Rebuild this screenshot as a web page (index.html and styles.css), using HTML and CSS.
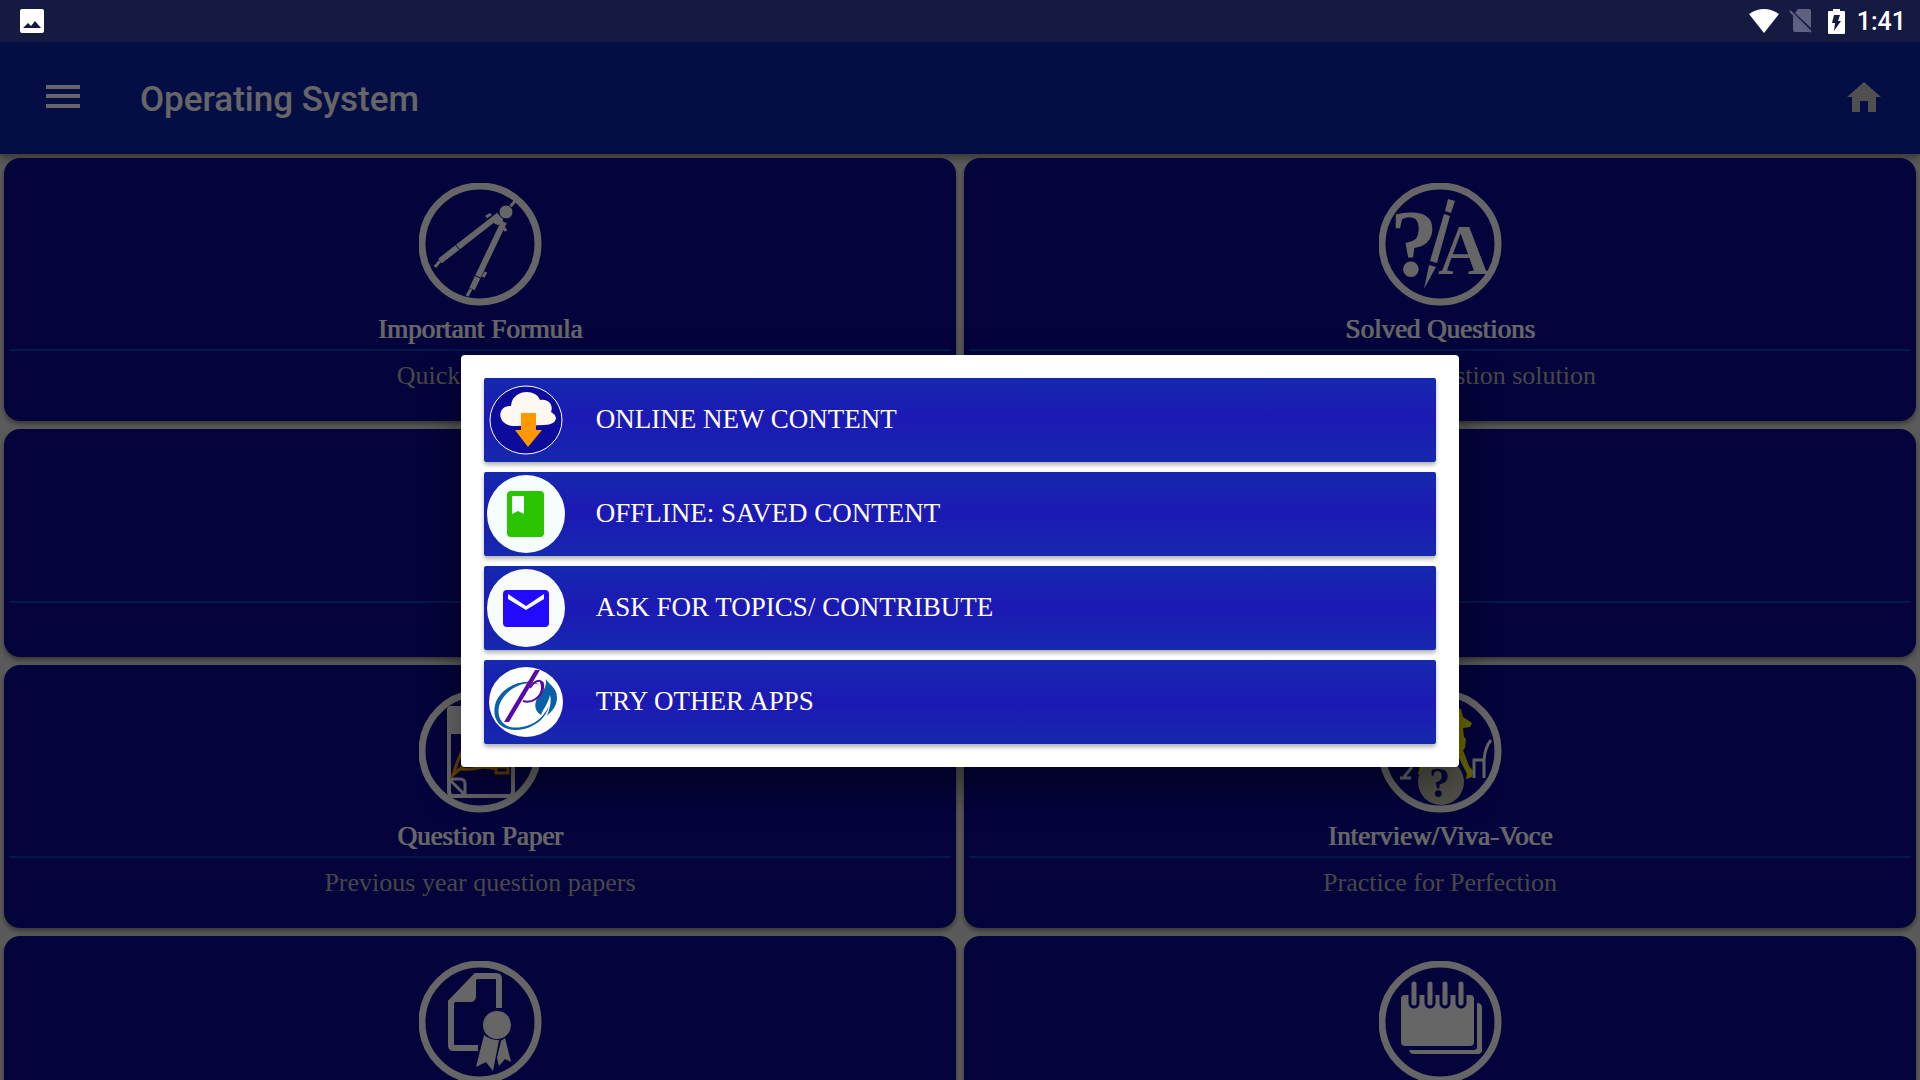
FILE: index.html
```html
<!DOCTYPE html>
<html lang="en">

<head>
    <meta charset="UTF-8">
    <meta name="viewport" content="width=device-width, initial-scale=1.0">
    <title>Operating System</title>
    <link rel="stylesheet" href="styles.css">
</head>

<body>
    <div class="status-bar">
        <svg class="status-icon" viewBox="0 0 24 24">
            <path fill="#fff" fill-rule="evenodd" d="M2 0h20a2 2 0 0 1 2 2v20a2 2 0 0 1-2 2H2a2 2 0 0 1-2-2V2a2 2 0 0 1 2-2zM3 19h18l-6-7-4 5-3-3z" />
        </svg>
        <div class="status-right">
            <svg class="wifi" viewBox="0 0 30 24">
                <path fill="#fff" d="M0 5Q15-5 30 5L15 24z" />
            </svg>
            <svg class="sim" viewBox="0 0 24 24">
                <path fill="#5e6180" d="M9 0h11a2 2 0 0 1 2 2v17L6 4zM4 6l17 17H6a2 2 0 0 1-2-2z" />
                <path stroke="#5e6180" stroke-width="2" d="M1 2l21 21" />
            </svg>
            <svg class="battery" viewBox="0 0 17 25">
                <path fill="#fff" d="M5 0h7v2h4a1 1 0 0 1 1 1v21a1 1 0 0 1-1 1H1a1 1 0 0 1-1-1V3a1 1 0 0 1 1-1h4z" />
                <path fill="#141a40" d="M6 6h6l-2 6h3L6 22l1-8H4z" />
            </svg>
            <span class="clock">1:41</span>
        </div>
    </div>

    <div class="screen">
        <header class="app-bar">
            <button class="icon-button" aria-label="Menu">
                <svg class="menu-icon" viewBox="0 0 34 34">
                    <path fill="#fff" d="M0 4h34v4H0zM0 13h34v4H0zM0 23h34v4H0z" />
                </svg>
            </button>
            <h1>Operating System</h1>
            <button class="icon-button" aria-label="Home">
                <svg class="home-icon" viewBox="0 0 34 34">
                    <path fill="#c8c8c8" d="M17 1l17 15h-5v15h-8V20h-8v11H5V16H0z" />
                </svg>
            </button>
        </header>

        <main class="grid">
            <section class="card">
                <svg class="card-icon" viewBox="0 0 123 123">
                    <circle class="ring" cx="61" cy="61" r="58" />
                    <path class="line leg" d="M80 32L21 78M85 39L53 106" />
                    <path class="line thin" d="M21 78l-5 6M52 106l-4 7M91 24l5-6M67 34l5-3M87 48l-2-3M64 94l3-5" />
                    <path class="cut" d="M36 61l5 6M55 92l8 4" />
                    <circle class="fill" cx="79" cy="37" r="5" />
                    <circle class="fill outlined" cx="87" cy="29" r="7" />
                </svg>
                <h2>Important Formula</h2>
                <p>Quick reference</p>
            </section>

            <section class="card">
                <svg class="card-icon" viewBox="0 0 123 123">
                    <circle class="ring" cx="61" cy="61" r="58" />
                    <text class="glyph" x="11" y="93" font-size="96">?</text>
                    <text class="glyph" x="59" y="91" font-size="72">A</text>
                    <path class="fill" d="M69 16l7 2-4 12-6-2zM65 31l6 2-13 47-7-2zM50 82l7 2-12 22z" />
                </svg>
                <h2>Solved Questions</h2>
                <p>Step by step question solution</p>
            </section>

            <section class="card card-short"></section>
            <section class="card card-short"></section>

            <section class="card">
                <svg class="card-icon" viewBox="0 0 123 123">
                    <circle class="ring" cx="61" cy="61" r="58" />
                    <path class="fill" d="M31 16h60a4 4 0 0 1 4 4v24H28V20a4 4 0 0 1 3-4z" />
                    <rect class="line" x="30" y="18" width="64" height="88" rx="4" />
                    <path class="line thin" d="M30 89h11q5 0 5 5v12M31 90l15 15" />
                    <path class="pencil" d="M34 85l4-12 6-14 8 5-10 14zM41 79q10 1 18-1t18 1M77 77h12v6H77z" />
                </svg>
                <h2>Question Paper</h2>
                <p>Previous year question papers</p>
            </section>

            <section class="card">
                <svg class="card-icon" viewBox="0 0 123 123">
                    <circle class="ring" cx="61" cy="61" r="58" />
                    <path fill="#ff0" d="M74 18l8 1 2 8 9 6-2 4-7 1 1 9 2 2-1 9-2 2 6 16 4 5-1 6-6 2 1-5-10-20-7-7-27 28-5-1 3-12 24-30z" />
                    <path class="line thin" d="M112 50q-6 7-7 20v18M105 70H95v18M21 88h11M25 87l8-10" />
                    <circle fill="#ccccb8" cx="62" cy="92" r="23" />
                    <text class="glyph glyph-dark" x="50" y="107" font-size="42">?</text>
                </svg>
                <h2>Interview/Viva-Voce</h2>
                <p>Practice for Perfection</p>
            </section>

            <section class="card">
                <svg class="card-icon" viewBox="0 0 123 123">
                    <circle class="ring" cx="61" cy="61" r="58" />
                    <path class="line leg" d="M80 47V18q0-3-3-3H57L32 41v43q0 3 3 3h24" />
                    <path class="fill" d="M57 15v20q0 6-6 6H32z" />
                    <circle class="fill" cx="78" cy="64" r="14" />
                    <path class="fill" d="M65 74q6 5 15 5l-6 31-7-9-10 5zM82 80l4-3 6 24-6-3-6 7-2-8z" />
                </svg>
            </section>

            <section class="card">
                <svg class="card-icon" viewBox="0 0 123 123">
                    <circle class="ring" cx="61" cy="61" r="58" />
                    <rect class="fill" x="22" y="34" width="73" height="51" rx="4" />
                    <path class="fill" d="M98 42q5 0 5 5v42q0 4-4 4H34q-3 0-4-4h65q3 0 3-3z" />
                    <path class="ring-hole" d="M35 34v8M51 34v8M66 34v8M82 34v8" />
                    <path class="ring-bar" d="M35 23v19M51 23v19M66 23v19M82 23v19" />
                </svg>
            </section>
        </main>

        <div class="overlay">
            <div class="dialog" role="dialog" aria-label="Content options">
                <button class="option">
                    <svg class="option-icon" viewBox="0 0 84 84">
                        <ellipse cx="42" cy="42" rx="36" ry="34" fill="#0c0b9c" stroke="#fff" />
                        <path fill="#fff8f0" d="M27 28C28 11 52 10 56 22C64 20 70 27 67 34C76 39 72 47 60 47L32 48C12 49 12 27 27 28z" />
                        <path fill="#ff9800" d="M37 35h15v17h6L44 69 31 52h6z" />
                    </svg>
                    <span>ONLINE NEW CONTENT</span>
                </button>
                <button class="option">
                    <svg class="option-icon" viewBox="0 0 84 84">
                        <circle cx="42" cy="42" r="39" fill="#f5fdfd" />
                        <rect x="23" y="19" width="37" height="46" rx="4" fill="#2ac500" />
                        <path fill="#f5fdfd" d="M28 24h12v18l-6-3-6 3z" />
                    </svg>
                    <span>OFFLINE: SAVED CONTENT</span>
                </button>
                <button class="option">
                    <svg class="option-icon" viewBox="0 0 84 84">
                        <circle cx="42" cy="42" r="39" fill="#f7fcfa" />
                        <rect x="19" y="24" width="46" height="37" rx="4" fill="#220aff" />
                        <path fill="#f7fcfa" d="M24 28l18 12 18-12v5L42 44 24 33z" />
                    </svg>
                    <span>ASK FOR TOPICS/ CONTRIBUTE</span>
                </button>
                <button class="option">
                    <svg class="option-icon" viewBox="0 0 84 84">
                        <ellipse cx="42" cy="42" rx="37" ry="35" fill="#fff" />
                        <path fill="#0860a8" d="M56 25C42 16 16 26 11 45C7 64 22 73 40 69C52 66 62 58 65 46C59 58 50 65 38 67C23 70 12 62 15 46C20 30 39 19 56 25z" />
                        <path fill="#0860a8" d="M62 19C65 25 73 27 73 38C73 46 68 51 63 56C65 50 68 43 66 35C64 44 59 49 57 55C50 51 50 43 54 37C58 33 63 27 62 19z" />
                        <path fill="#5a08a8" d="M51 10h5L25 62h-5z" />
                        <path fill="none" stroke="#5a08a8" stroke-width="2" d="M46 28C52 18 61 19 59 28C57 37 48 44 39 41" />
                        <path fill="#5a08a8" d="M55 20C62 23 62 32 52 39C58 32 58 26 55 20z" />
                    </svg>
                    <span>TRY OTHER APPS</span>
                </button>
            </div>
        </div>
    </div>
</body>

</html>
```

FILE: styles.css
```css
* {
    box-sizing: border-box;
}

body {
    margin: 0;
    height: 100vh;
    display: flex;
    flex-direction: column;
    overflow: hidden;
    background-color: #141a40;
    font-family: "Liberation Serif", serif;
}

h1,
h2,
p {
    margin: 0;
    font-weight: normal;
}

button {
    border: none;
    cursor: pointer;
}

/* Status bar */
.status-bar {
    display: flex;
    flex: none;
    align-items: center;
    justify-content: space-between;
    height: 42px;
    padding: 0 14px 0 20px;
    background-color: #141a40;
}

.status-icon {
    width: 24px;
    height: 24px;
}

.status-right {
    display: flex;
    align-items: center;
}

.wifi {
    width: 30px;
    height: 24px;
}

.sim {
    width: 24px;
    height: 24px;
    margin: 0 15px 0 10px;
}

.battery {
    width: 17px;
    height: 25px;
    margin-right: 12px;
}

.clock {
    padding-top: 2px;
    color: #fff;
    font: 500 25px/40px Roboto, sans-serif;
}

/* Screen below the status bar */
.screen {
    position: relative;
    flex: 1;
    min-height: 0;
    overflow: hidden;
    background-color: #e2e2e2;
}

.app-bar {
    display: flex;
    align-items: center;
    height: 112px;
    padding: 0 39px 0 46px;
    background-color: #0d24aa;
    box-shadow: 0 4px 8px rgba(0, 0, 0, 0.4);
}

.app-bar h1 {
    flex: 1;
    margin-left: 60px;
    padding-top: 4px;
    color: #fff;
    font: 500 35px/42px Roboto, sans-serif;
}

.icon-button {
    padding: 0;
    background: none;
}

.menu-icon,
.home-icon {
    display: block;
    width: 34px;
    height: 34px;
}

.grid {
    display: grid;
    grid-template-columns: 1fr 1fr;
    gap: 8px;
    padding: 4px;
}

.card {
    display: flex;
    flex-direction: column;
    align-items: center;
    min-height: 263px;
    padding: 25px 5px 0;
    border-radius: 16px;
    background-color: #0a0896;
    box-shadow: 0 3px 5px rgba(0, 0, 0, 0.4);
    text-align: center;
}

.card-icon {
    width: 123px;
    height: 123px;
}

.card h2 {
    width: 100%;
    height: 45px;
    padding-top: 5px;
    border-bottom: 2px solid #0e3cb0;
    color: #fff;
    font-size: 27px;
    line-height: 36px;
    text-shadow: 1px 0 #fff;
}

.card p {
    margin-top: 7px;
    color: #b2b2b2;
    font-size: 26px;
    line-height: 36px;
}

.card-short {
    min-height: 228px;
    padding-top: 0;
}

.card-short::before {
    content: "";
    width: 100%;
    height: 172px;
    border-bottom: 2px solid #0e3cb0;
}

/* Card icons */
.ring {
    fill: none;
    stroke: #fff;
    stroke-width: 7;
}

.fill {
    fill: #fff;
}

.outlined {
    stroke: #0a0896;
}

.line {
    fill: none;
    stroke: #fff;
    stroke-width: 4;
}

.leg {
    stroke-width: 6;
}

.thin {
    stroke-width: 3;
}

.cut {
    stroke: #0a0896;
    stroke-width: 1;
}

.pencil {
    fill: none;
    stroke: #ffa000;
    stroke-width: 3;
}

.glyph {
    fill: #fff;
    font-weight: bold;
}

.glyph-dark {
    fill: #0a0896;
}

.ring-hole {
    stroke: #0a0896;
    stroke-width: 11;
    stroke-linecap: round;
}

.ring-bar {
    stroke: #fff;
    stroke-width: 5;
    stroke-linecap: round;
}

/* Dialog */
.overlay {
    position: absolute;
    inset: 0;
    display: flex;
    align-items: center;
    justify-content: center;
    background-color: rgba(0, 0, 0, 0.6);
}

.dialog {
    display: flex;
    flex-direction: column;
    gap: 10px;
    width: 52%;
    padding: 23px;
    border-radius: 4px;
    background-color: #fff;
    box-shadow: 0 20px 40px rgba(0, 0, 0, 0.4);
}

.option {
    display: flex;
    align-items: center;
    gap: 28px;
    padding: 0;
    border-radius: 2px;
    background: linear-gradient(#1529ae, #1c19b4, #1529ae);
    box-shadow: 0 3px 4px rgba(0, 0, 0, 0.3);
    color: #fff;
    font-family: "Liberation Serif", serif;
    font-size: 27px;
    text-align: left;
}

.option span {
    padding-bottom: 2px;
}

.option-icon {
    width: 84px;
    height: 84px;
}
```
